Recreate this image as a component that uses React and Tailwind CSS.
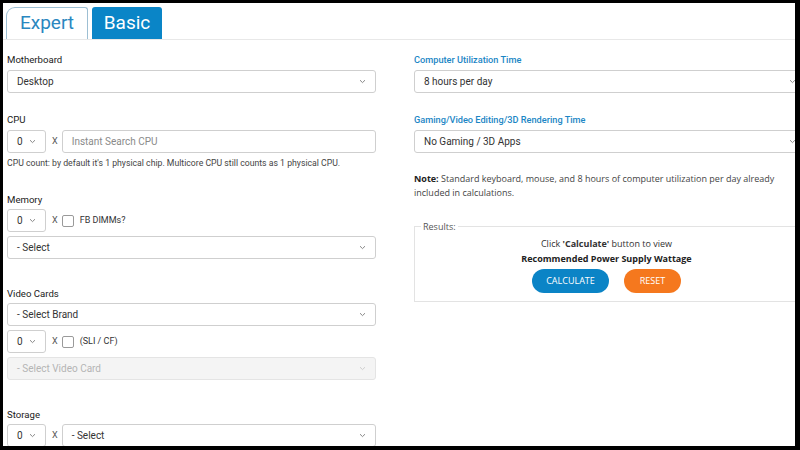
import React from 'react';

const roboto = { fontFamily: 'Roboto, "Liberation Sans", sans-serif' };
const openSans = { fontFamily: '"Open Sans", "Liberation Sans", sans-serif' };

const Chevron = ({ className = 'text-gray-500' }) => (
  <svg width="7" height="5" viewBox="0 0 7 5" className={className}>
    <path d="M1 1.2 L3.5 3.6 L6 1.2" fill="none" stroke="currentColor" strokeWidth="1" />
  </svg>
);

const Select = ({ value, className = '', disabled = false }) => (
  <div
    className={`flex h-[23px] items-center justify-between rounded-[3px] border px-[9px] text-[10px] ${
      disabled ? 'border-[#e4e4e4] bg-[#f4f4f4] text-[#b5b5b5]' : 'border-[#cfcfcf] bg-white text-[#333]'
    } ${className}`}
  >
    <span>{value}</span>
    <Chevron className={disabled ? 'text-[#cfcfcf]' : 'text-[#888]'} />
  </div>
);

const Qty = () => <Select value="0" className="w-[39px] shrink-0" />;

const Check = ({ label }) => (
  <div className="flex items-center gap-[6px]">
    <div className="h-[12px] w-[12px] rounded-[2px] border border-[#9a9a9a] bg-white" />
    <span className="text-[9px] text-[#333]">{label}</span>
  </div>
);

const Times = () => <span className="ml-[6px] mr-[4px] text-[9px] text-[#555]">X</span>;

const Label = ({ children, className = '', blue = false }) => (
  <div
    className={`h-[13px] leading-[13px] ${
      blue ? 'text-[9.2px] font-medium text-[#1b86c5]' : 'text-[9.6px] text-[#1a1a1a]'
    } ${className}`}
  >
    {children}
  </div>
);

export default function App() {
  return (
    <div className="h-[450px] w-[800px] bg-black pb-[4px] pl-[3px] pr-[5px] pt-[3px]" style={roboto}>
      <div className="h-full w-full overflow-hidden bg-white">
        <div className="flex h-[37px] items-end gap-[4px] border-b border-[#e8e8e8] pl-[3px]">
          <div className="flex h-[32px] w-[82px] items-center justify-center rounded-tl-[9px] rounded-tr-[3px] border border-b-0 border-[#9dbfd3] bg-white text-[19px] text-[#2a87c0]">
            Expert
          </div>
          <div className="flex h-[32px] w-[70px] items-center justify-center rounded-t-[3px] bg-[#0a85c7] text-[19px] text-white">
            Basic
          </div>
        </div>

        <div className="flex gap-[38px] pl-[4px]">
          <div className="w-[369px] shrink-0">
            <Label className="mt-[13px]">Motherboard</Label>
            <Select value="Desktop" className="mt-[4px]" />

            <Label className="mt-[20px]">CPU</Label>
            <div className="mt-[4px] flex items-center">
              <Qty />
              <Times />
              <div className="flex h-[23px] flex-1 items-center rounded-[3px] border border-[#cfcfcf] px-[9px] text-[10px] text-[#8a8a8a]">
                Instant Search CPU
              </div>
            </div>
            <div className="mt-[4px] h-[13px] text-[8.7px] leading-[13px] text-[#444]">
              CPU count: by default it's 1 physical chip. Multicore CPU still counts as 1 physical CPU.
            </div>

            <Label className="mt-[23px]">Memory</Label>
            <div className="mt-[3px] flex items-center">
              <Qty />
              <Times />
              <Check label="FB DIMMs?" />
            </div>
            <Select value="- Select" className="mt-[4px]" />

            <Label className="mt-[28px]">Video Cards</Label>
            <Select value="- Select Brand" className="mt-[3px]" />
            <div className="mt-[4px] flex items-center">
              <Qty />
              <Times />
              <Check label="(SLI / CF)" />
            </div>
            <Select value="- Select Video Card" className="mt-[4px]" disabled />

            <Label className="mt-[28px]">Storage</Label>
            <div className="mt-[3px] flex items-center">
              <Qty />
              <Times />
              <Select value="- Select" className="flex-1" />
            </div>
          </div>

          <div className="w-[392px] shrink-0">
            <Label blue className="mt-[13px]">Computer Utilization Time</Label>
            <Select value="8 hours per day" className="mt-[4px]" />

            <Label blue className="mt-[20px]">Gaming/Video Editing/3D Rendering Time</Label>
            <Select value="No Gaming / 3D Apps" className="mt-[4px]" />

            <div className="mt-[19px] w-[375px] text-[9px] leading-[14px] text-[#444]" style={openSans}>
              <span className="font-bold text-[#222]">Note: </span>
              Standard keyboard, mouse, and 8 hours of computer utilization per day already included in calculations.
            </div>

            <fieldset className="mt-[20px] h-[82px] w-[385px] border border-[#e3e3e3] pb-[8px]" style={openSans}>
              <legend className="ml-[6px] px-[2px] text-[9px] text-[#555]">Results:</legend>
              <div className="mt-[2px] text-center text-[9px] leading-[15px] text-[#333]">
                Click <b>'Calculate'</b> button to view
              </div>
              <div className="text-center text-[9px] font-bold leading-[15px] text-[#222]">
                Recommended Power Supply Wattage
              </div>
              <div className="mt-[3px] flex justify-center gap-[15px]">
                <button className="h-[24px] w-[77px] rounded-full bg-[#0b84c6] text-[9px] text-white">CALCULATE</button>
                <button className="h-[24px] w-[57px] rounded-full bg-[#f5781e] text-[9px] text-white">RESET</button>
              </div>
            </fieldset>
          </div>
        </div>
      </div>
    </div>
  );
}
